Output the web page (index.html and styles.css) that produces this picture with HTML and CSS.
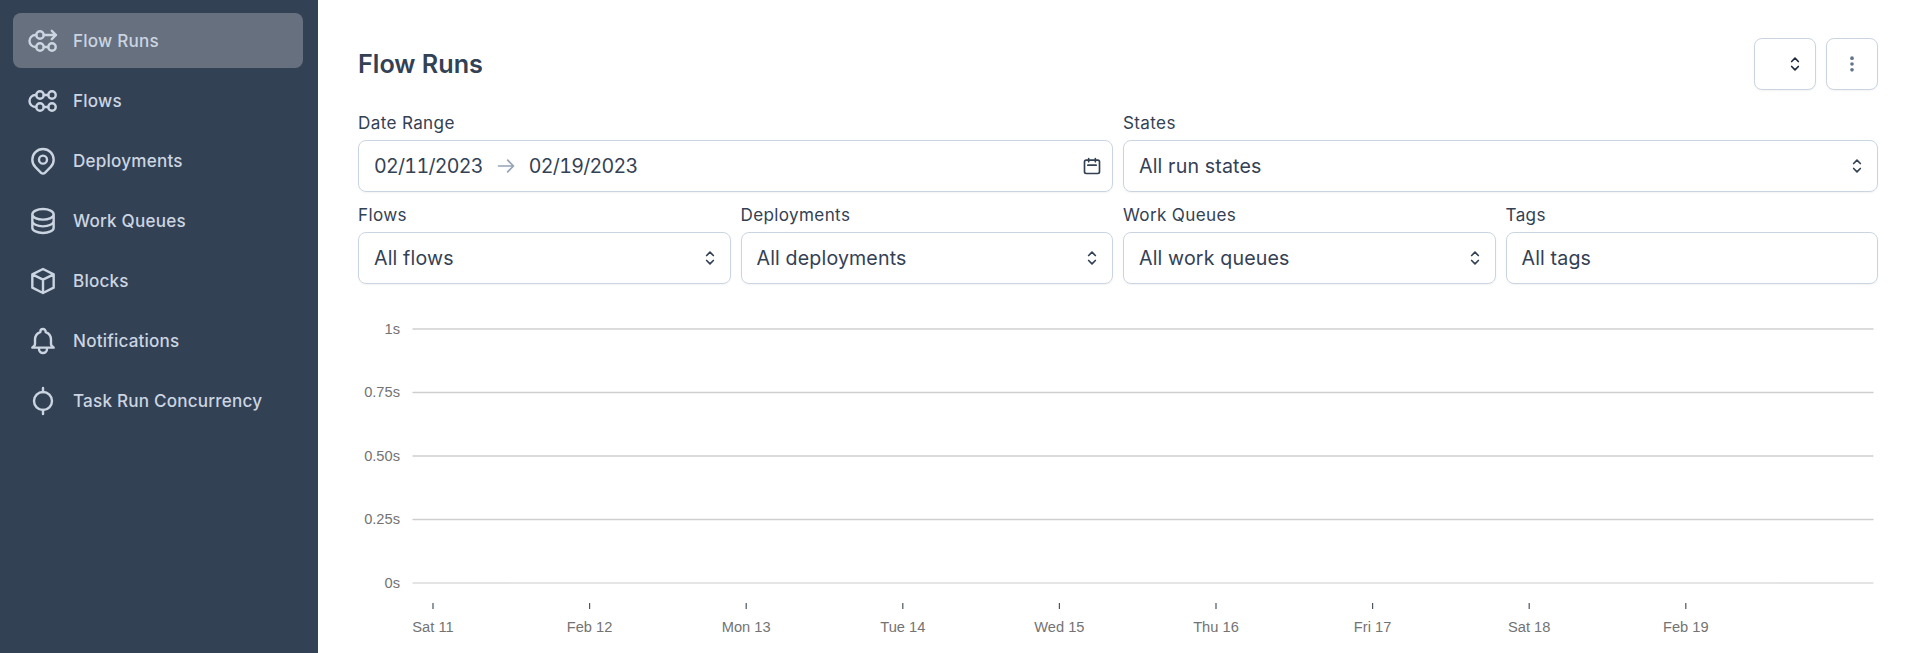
FILE: index.html
```html
<!DOCTYPE html>
<html lang="en">
<head>
    <meta charset="UTF-8">
    <meta name="viewport" content="width=device-width, initial-scale=1.0">
    <title>Flow Runs</title>
    <link rel="stylesheet" href="styles.css">
</head>
<body>
    <!-- Sidebar -->
    <nav class="sidebar">
        <a class="nav-item active">
            <svg class="nav-icon" viewBox="0 0 32 32"><circle cx="13" cy="10" r="3.7"/><circle cx="13" cy="22" r="3.7"/><circle cx="25" cy="22" r="3.7"/><path d="M9.3 10H8.5a6 6 0 0 0 0 12h.8M16.7 22h4.6M16.7 10h12.3M24.8 5.800l4.200 4.200-4.200 4.200"/></svg>
            <span>Flow Runs</span>
        </a>
        <a class="nav-item">
            <svg class="nav-icon" viewBox="0 0 32 32"><circle cx="13" cy="10" r="3.7"/><circle cx="25" cy="10" r="3.7"/><circle cx="13" cy="22" r="3.7"/><circle cx="25" cy="22" r="3.7"/><path d="M9.3 10H8.5a6 6 0 0 0 0 12h.8M16.7 22h4.600M16.700 10h4.600"/></svg>
            <span>Flows</span>
        </a>
        <a class="nav-item">
            <svg class="nav-icon" viewBox="0 0 24 24"><path d="M17.657 16.657L13.414 20.9a1.998 1.998 0 01-2.827 0l-4.244-4.243a8 8 0 1111.314 0z"/><path d="M15 11a3 3 0 11-6 0 3 3 0 016 0z"/></svg>
            <span>Deployments</span>
        </a>
        <a class="nav-item">
            <svg class="nav-icon" viewBox="0 0 24 24"><path d="M4 7v10c0 2.21 3.582 4 8 4s8-1.79 8-4V7M4 7c0 2.21 3.582 4 8 4s8-1.79 8-4M4 7c0-2.21 3.582-4 8-4s8 1.79 8 4m0 5c0 2.21-3.582 4-8 4s-8-1.79-8-4"/></svg>
            <span>Work Queues</span>
        </a>
        <a class="nav-item">
            <svg class="nav-icon" viewBox="0 0 24 24"><path d="M20 7l-8-4-8 4m16 0l-8 4m8-4v10l-8 4m0-10L4 7m8 4v10M4 7v10l8 4"/></svg>
            <span>Blocks</span>
        </a>
        <a class="nav-item">
            <svg class="nav-icon" viewBox="0 0 24 24"><path d="M15 17h5l-1.405-1.405A2.032 2.032 0 0118 14.158V11a6.002 6.002 0 00-4-5.659V5a2 2 0 10-4 0v.341C7.67 6.165 6 8.388 6 11v3.159c0 .538-.214 1.055-.595 1.436L4 17h5m6 0v1a3 3 0 11-6 0v-1m6 0H9"/></svg>
            <span>Notifications</span>
        </a>
        <a class="nav-item">
            <svg class="nav-icon" viewBox="0 0 32 32"><circle cx="16" cy="16" r="9"/><path d="M16 7V3M16 25v4"/></svg>
            <span>Task Run Concurrency</span>
        </a>
    </nav>

    <main class="content">
        <!-- Page header -->
        <header class="page-header">
            <h1>Flow Runs</h1>
            <div class="header-actions">
                <button class="icon-button sort-button">
                    <svg class="chevrons dark" viewBox="0 0 24 24"><path d="M8 9l4-4 4 4m0 6l-4 4-4-4"/></svg>
                </button>
                <button class="icon-button menu-button">
                    <svg class="dots" viewBox="0 0 24 24"><circle cx="12" cy="5" r="2.2"/><circle cx="12" cy="12" r="2.2"/><circle cx="12" cy="19" r="2.2"/></svg>
                </button>
            </div>
        </header>

        <!-- Filters -->
        <section class="filters">
            <div class="field span-2">
                <label>Date Range</label>
                <div class="control">
                    <span class="date-value">02/11/2023</span>
                    <svg class="date-arrow" viewBox="0 0 24 24"><path d="M14 5l7 7m0 0l-7 7m7-7H3"/></svg>
                    <span class="date-value">02/19/2023</span>
                    <svg class="calendar" viewBox="0 0 24 24"><path d="M8 7V3m8 4V3m-9 8h10M5 21h14a2 2 0 002-2V7a2 2 0 00-2-2H5a2 2 0 00-2 2v12a2 2 0 002 2z"/></svg>
                </div>
            </div>
            <div class="field span-2">
                <label>States</label>
                <div class="control">
                    <span>All run states</span>
                    <svg class="chevrons" viewBox="0 0 24 24"><path d="M8 9l4-4 4 4m0 6l-4 4-4-4"/></svg>
                </div>
            </div>
            <div class="field">
                <label>Flows</label>
                <div class="control">
                    <span>All flows</span>
                    <svg class="chevrons" viewBox="0 0 24 24"><path d="M8 9l4-4 4 4m0 6l-4 4-4-4"/></svg>
                </div>
            </div>
            <div class="field">
                <label>Deployments</label>
                <div class="control">
                    <span>All deployments</span>
                    <svg class="chevrons" viewBox="0 0 24 24"><path d="M8 9l4-4 4 4m0 6l-4 4-4-4"/></svg>
                </div>
            </div>
            <div class="field">
                <label>Work Queues</label>
                <div class="control">
                    <span>All work queues</span>
                    <svg class="chevrons" viewBox="0 0 24 24"><path d="M8 9l4-4 4 4m0 6l-4 4-4-4"/></svg>
                </div>
            </div>
            <div class="field">
                <label>Tags</label>
                <div class="control">
                    <span>All tags</span>
                </div>
            </div>
        </section>

        <!-- Chart -->
        <svg class="chart" viewBox="0 0 1520 353">
            <line class="grid-line" x1="55" x2="1515" y1="29" y2="29"/>
            <line class="grid-line" x1="55" x2="1515" y1="92.5" y2="92.5"/>
            <line class="grid-line" x1="55" x2="1515" y1="156" y2="156"/>
            <line class="grid-line" x1="55" x2="1515" y1="219.500" y2="219.500"/>
            <line class="grid-line zero" x1="55" x2="1515" y1="283" y2="283"/>

            <text class="y-label" x="42" y="34">1s</text>
            <text class="y-label" x="42" y="97">0.75s</text>
            <text class="y-label" x="42" y="161">0.50s</text>
            <text class="y-label" x="42" y="224">0.25s</text>
            <text class="y-label" x="42" y="288">0s</text>

            <path class="tick" d="M75 303v6M231.600 303v6M388.200 303v6M544.800 303v6M701.400 303v6M858 303v6M1014.600 303v6M1171.200 303v6M1327.800 303v6"/>

            <text class="x-label" x="75" y="332">Sat 11</text>
            <text class="x-label" x="231.600" y="332">Feb 12</text>
            <text class="x-label" x="388.200" y="332">Mon 13</text>
            <text class="x-label" x="544.800" y="332">Tue 14</text>
            <text class="x-label" x="701.400" y="332">Wed 15</text>
            <text class="x-label" x="858" y="332">Thu 16</text>
            <text class="x-label" x="1014.600" y="332">Fri 17</text>
            <text class="x-label" x="1171.200" y="332">Sat 18</text>
            <text class="x-label" x="1327.800" y="332">Feb 19</text>
        </svg>
    </main>
</body>
</html>
```
FILE: styles.css
```css
* {
    box-sizing: border-box;
}
html, body {
    height: 100%;
}
body {
    margin: 0;
    display: flex;
    overflow: hidden;
    font-family: Inter, "Liberation Sans", sans-serif;
    color: #334155;
    background-color: #fff;
}
svg {
    fill: none;
    stroke: currentColor;
    stroke-width: 2;
    stroke-linecap: round;
    stroke-linejoin: round;
    flex-shrink: 0;
}

/* Sidebar */
.sidebar {
    width: 318px;
    flex-shrink: 0;
    display: flex;
    flex-direction: column;
    gap: 5px;
    padding: 13px 15px 0 13px;
    background-color: #334155;
}
.nav-item {
    display: flex;
    align-items: center;
    gap: 14px;
    height: 55px;
    padding: 0 14px;
    border-radius: 8px;
    color: #cbd5e1;
    font-size: 17.1px;
    font-weight: 500;
    letter-spacing: 0.2px;
}
.nav-item.active {
    background-color: rgba(255, 255, 255, 0.25);
}
.nav-icon {
    width: 32px;
    height: 32px;
    stroke-width: 1.8;
}
.nav-icon[viewBox="0 0 32 32"] {
    stroke-width: 2.4;
}

/* Main content */
.content {
    width: 1520px;
    margin-left: 40px;
    padding-top: 38px;
}
.page-header {
    display: flex;
    align-items: center;
    justify-content: space-between;
    margin-bottom: 21px;
}
h1 {
    margin: 0;
    font-size: 25.2px;
    font-weight: 600;
}
.header-actions {
    display: flex;
    gap: 10px;
}
.icon-button {
    display: flex;
    align-items: center;
    height: 52px;
    padding: 0;
    background: #fff;
    border: 1px solid #cbd5e1;
    border-radius: 8px;
    box-shadow: 0 1px 2px rgba(0, 0, 0, 0.05);
}
.sort-button {
    width: 62px;
    justify-content: flex-end;
    padding-right: 10px;
}
.menu-button {
    width: 52px;
    justify-content: center;
}
.dots {
    width: 20px;
    height: 20px;
    fill: #64748b;
    stroke: none;
}

/* Filters */
.filters {
    display: grid;
    grid-template-columns: repeat(4, 1fr);
    column-gap: 10px;
    row-gap: 11px;
}
.field {
    min-width: 0;
}
.span-2 {
    grid-column: span 2;
}
.field label {
    display: block;
    margin-bottom: 5px;
    font-size: 17.1px;
    line-height: 24px;
    font-weight: 400;
    letter-spacing: 0.35px;
}
.control {
    display: flex;
    align-items: center;
    justify-content: space-between;
    height: 52px;
    padding: 0 15px;
    border: 1px solid #cbd5e1;
    border-radius: 8px;
    box-shadow: 0 1px 2px rgba(0, 0, 0, 0.05);
    font-size: 19.6px;
    letter-spacing: 0.15px;
}
.date-value {
    flex-shrink: 0;
    letter-spacing: -0.7px;
    font-variant-numeric: tabular-nums;
}
.date-arrow {
    width: 20px;
    height: 20px;
    margin: 0 13px;
    color: #94a3b8;
}
.calendar {
    width: 20px;
    height: 20px;
    margin-left: auto;
    margin-right: -5px;
}
.chevrons {
    width: 20px;
    height: 20px;
    margin-right: -5px;
}
.chevrons.dark {
    margin-right: 0;
    color: #1e293b;
}

/* Chart */
.chart {
    display: block;
    width: 1520px;
    height: 353px;
    margin-top: 16px;
    stroke: none;
}
.grid-line {
    stroke: #cfcfcf;
    stroke-width: 1.3;
}
.grid-line.zero {
    stroke: #dcdcdc;
}
.tick {
    stroke: #4b5563;
    stroke-width: 1.2;
    stroke-linecap: butt;
}
.y-label, .x-label {
    fill: #737373;
    stroke: none;
    font-family: "Liberation Sans", Arial, sans-serif;
    font-size: 14.67px;
}
.y-label {
    text-anchor: end;
}
.x-label {
    text-anchor: middle;
}
```
